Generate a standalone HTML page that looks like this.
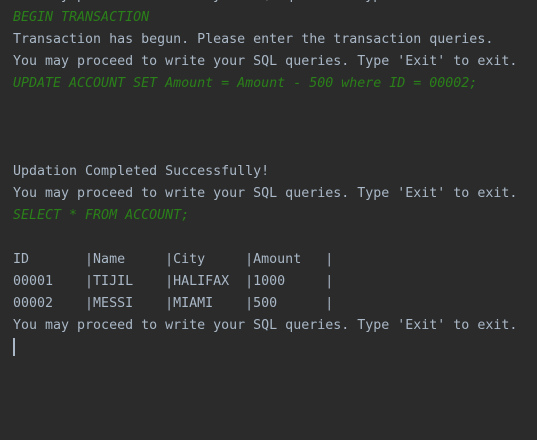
<!DOCTYPE html>
<html><head><style>
html,body{margin:0;padding:0;background:#2b2b2b;width:537px;height:440px;overflow:hidden}
.c{position:absolute;left:13px;top:-15px;font-family:"DejaVu Sans Mono","Liberation Mono",monospace;font-size:13.3px;line-height:22px;color:#a9b7c6;white-space:pre}
.g{color:#2a8019;font-style:italic}
.cur{display:inline-block;width:2px;height:18px;background:#a9b7c6;vertical-align:middle}
</style></head><body><div class="c">You may proceed to write your SQL queries. Type 'Exit' to exit.
<span class="g">BEGIN TRANSACTION</span>
Transaction has begun. Please enter the transaction queries.
You may proceed to write your SQL queries. Type 'Exit' to exit.
<span class="g">UPDATE ACCOUNT SET Amount = Amount - 500 where ID = 00002;</span>



Updation Completed Successfully!
You may proceed to write your SQL queries. Type 'Exit' to exit.
<span class="g">SELECT * FROM ACCOUNT;</span>

ID       |Name     |City     |Amount   |
00001    |TIJIL    |HALIFAX  |1000     |
00002    |MESSI    |MIAMI    |500      |
You may proceed to write your SQL queries. Type 'Exit' to exit.
<span class="cur"></span></div></body></html>
